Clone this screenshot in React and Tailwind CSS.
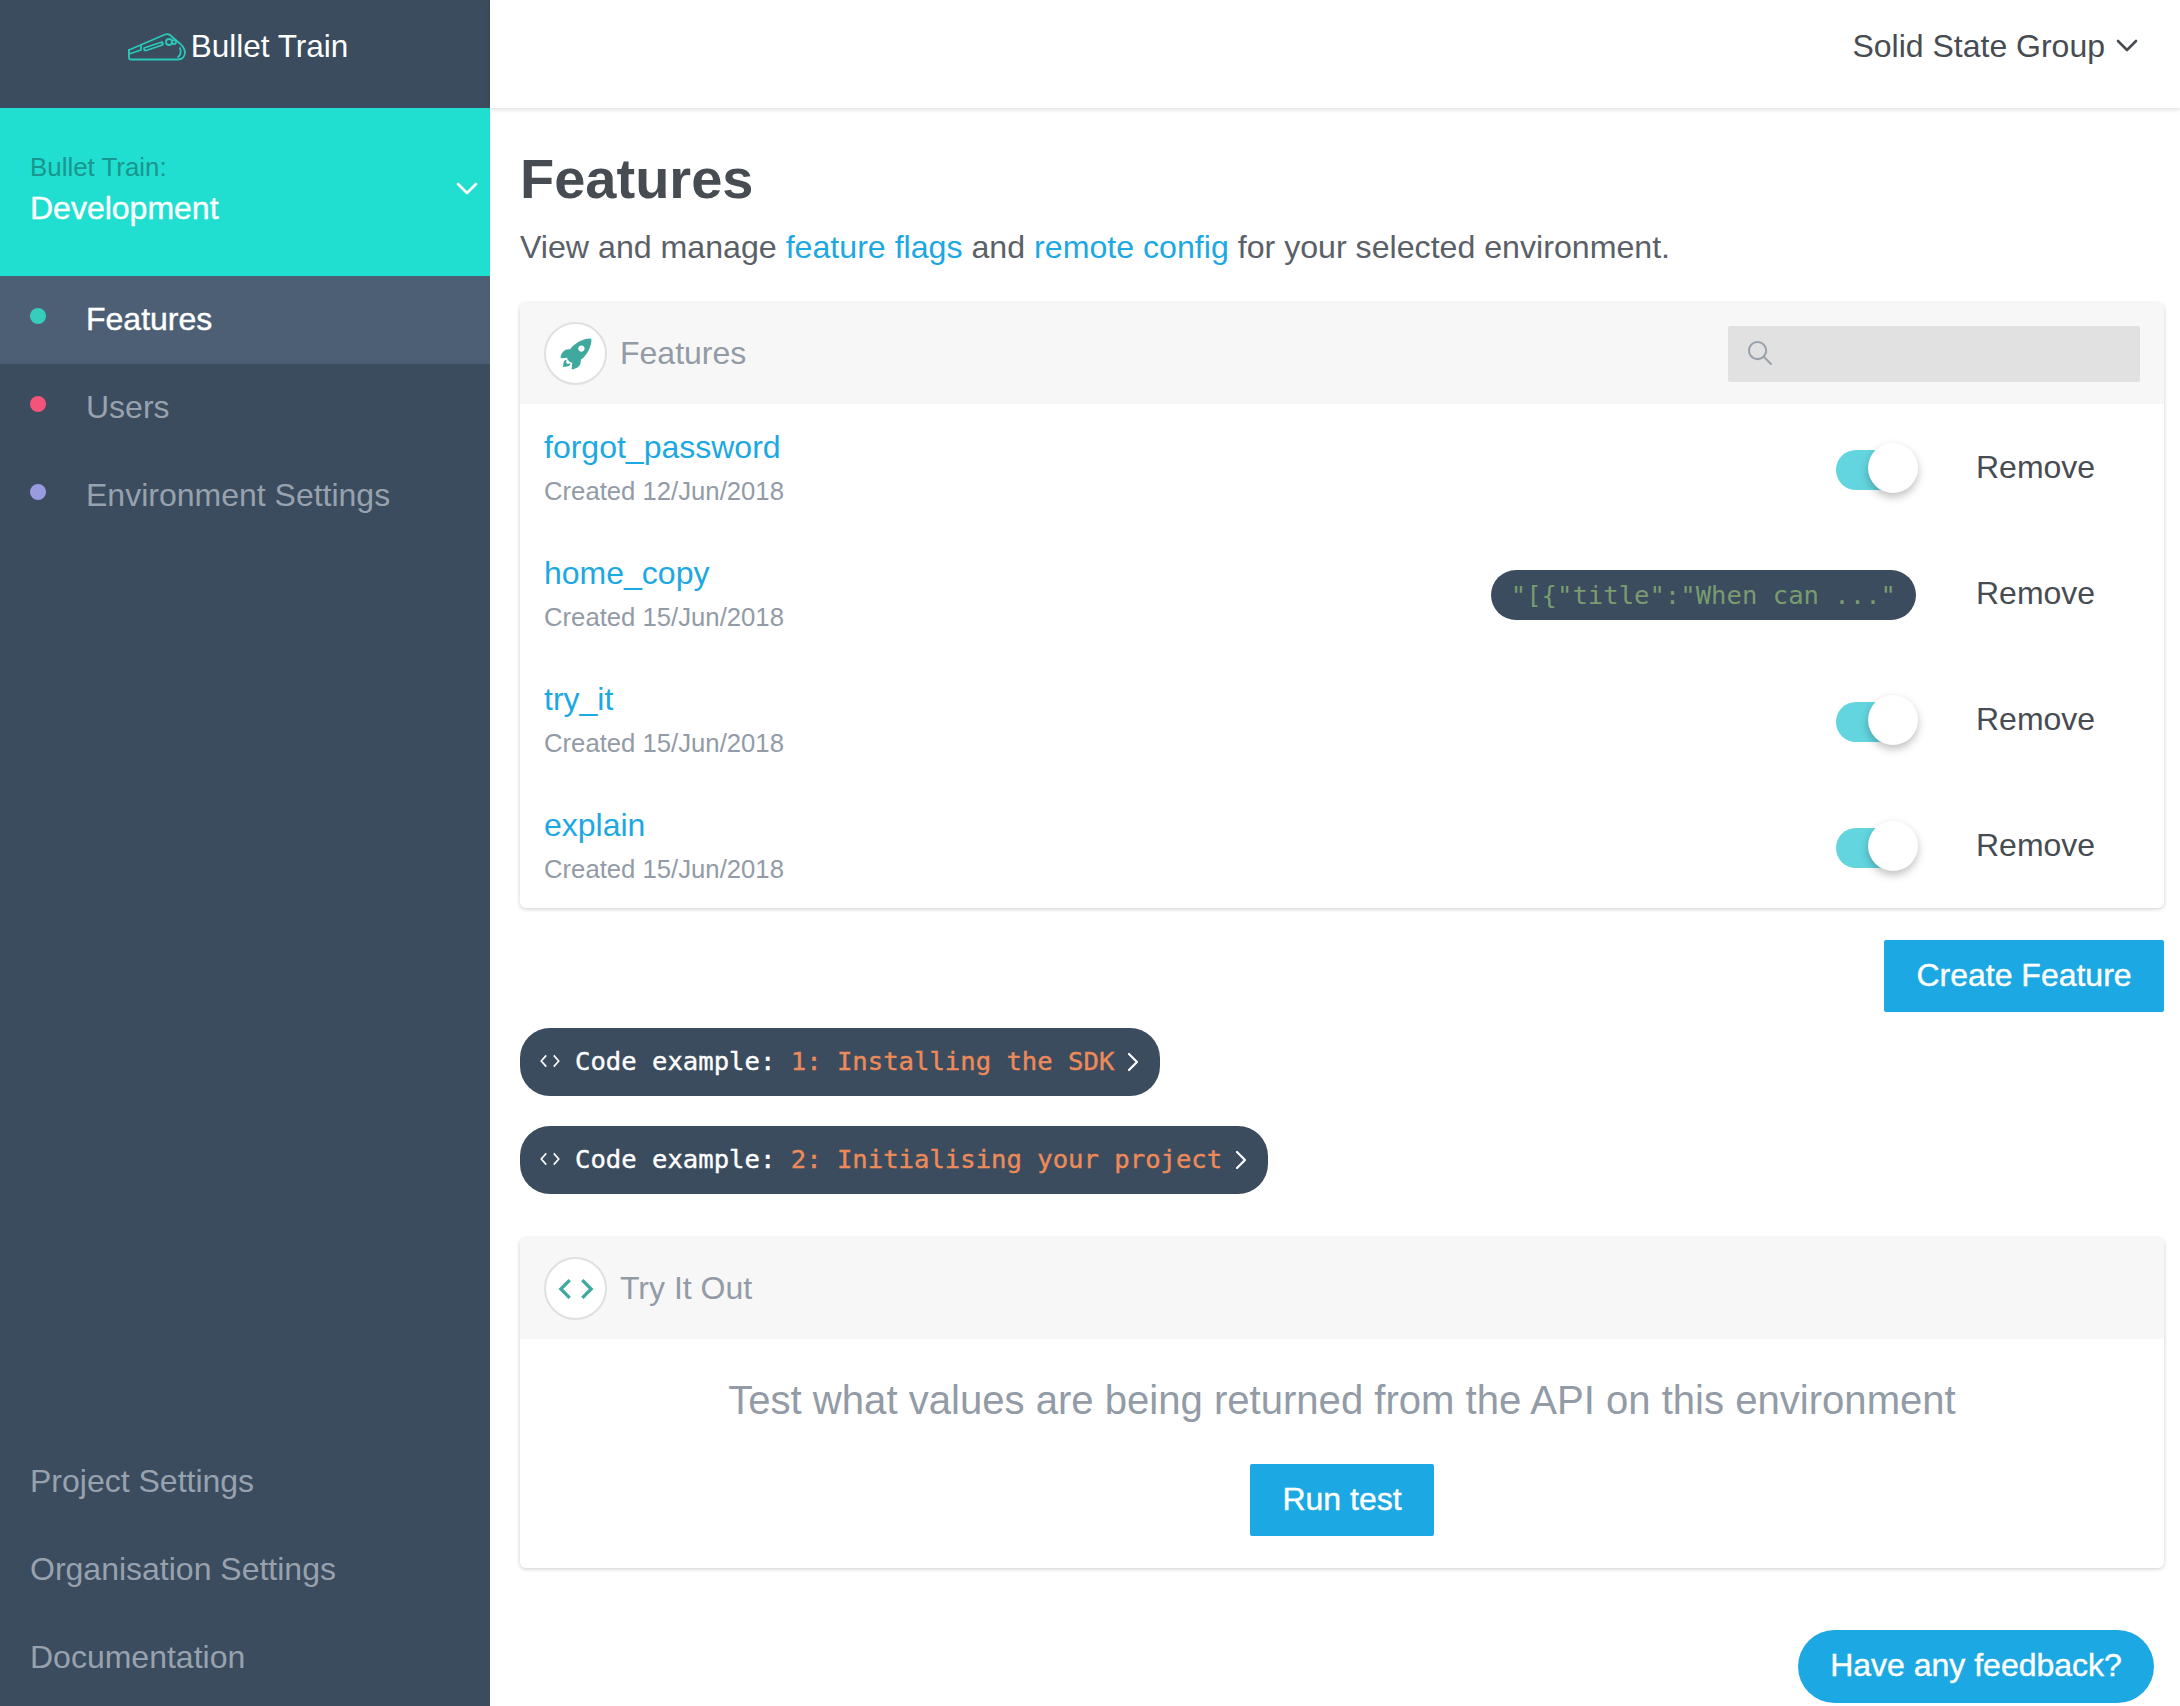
import React from 'react';
import { IoIosRocket, IoIosSearch, IoMdCode } from 'react-icons/io';

const features = [
    { name: 'forgot_password', created: 'Created 12/Jun/2018' },
    { name: 'home_copy', created: 'Created 15/Jun/2018', value: '"[{"title":"When can ..."' },
    { name: 'try_it', created: 'Created 15/Jun/2018' },
    { name: 'explain', created: 'Created 15/Jun/2018' },
];

const navItems = [
    { label: 'Features', dot: 'bg-[#37cdbd]', active: true },
    { label: 'Users', dot: 'bg-[#f4547a]' },
    { label: 'Environment Settings', dot: 'bg-[#9a9ae0]' },
];

function Logo() {
    return (
        <svg width="58" height="28" viewBox="0 0 58 28" fill="none" stroke="#2bc9b8" strokeWidth="1.8" strokeLinejoin="round" strokeLinecap="round">
            <path d="M1 17 L1 25 Q1 26.5 3 26.5 L50 26.5 Q57 26 57 19 Q56 13 50 9 L42 2 Q40 0.5 37 1.5 Z" />
            <path d="M1 17 L1 21 L13 17 L13 13" />
            <path d="M16 15 L34 9 L35 11 Q35 12 33 12.5 L18 17.5 Q16 18 16 15 Z" />
            <circle cx="41" cy="9" r="3" />
            <circle cx="46" cy="9" r="2" />
            <path d="M50 24 Q54 21 52 15" />
        </svg>
    );
}

function CodeIcon({ size }) {
    return (
        <svg width={size} height={size} viewBox="0 0 32 24" fill="none" stroke="currentColor" strokeWidth="2.6">
            <path d="M10 3 L2 12 L10 21" />
            <path d="M22 3 L30 12 L22 21" />
        </svg>
    );
}

function ChevronDownThin({ className }) {
    return (
        <svg width="22" height="14" viewBox="0 0 22 14" fill="none" stroke="currentColor" strokeWidth="2.6" strokeLinecap="round" strokeLinejoin="round" className={className}>
            <path d="M2 2 L11 11 L20 2" />
        </svg>
    );
}

function ChevronRightThin() {
    return (
        <svg width="12" height="20" viewBox="0 0 12 20" fill="none" stroke="currentColor" strokeWidth="2.2" strokeLinecap="round" strokeLinejoin="round" className="text-white ml-[13px]">
            <path d="M2 2 L10 10 L2 18" />
        </svg>
    );
}

function Toggle() {
    return (
        <div className="relative w-[82px] h-[40px] mt-[6px]">
            <div className="w-[64px] h-[40px] rounded-full bg-[#62d5df]"></div>
            <div className="absolute left-[32px] top-[-7px] w-[50px] h-[50px] rounded-full bg-white shadow-[0_4px_8px_rgba(0,0,0,0.25)]"></div>
        </div>
    );
}

function CodePill({ label }) {
    return (
        <div className="w-fit h-[68px] rounded-[30px] bg-[#3a4c5e] flex items-center pl-[20px] pr-[21px] font-['DejaVu_Sans_Mono',monospace] text-[25.6px] [-webkit-text-stroke:0.4px]">
            <span className="text-white flex items-center pb-[2px]">
                <span className="mr-[15px]"><CodeIcon size={20} /></span>
                Code example:&nbsp;
            </span>
            <span className="text-[#ed8a5a] pb-[2px]">{label}</span>
            <ChevronRightThin />
        </div>
    );
}

function CardHeader({ icon, title, children }) {
    return (
        <div className="h-[101px] bg-[#f7f7f7] flex items-center justify-between pl-[24px] pr-[24px] rounded-t-[6px]">
            <div className="flex items-center">
                <div className="w-[63px] h-[63px] rounded-full bg-white border-2 border-[#e0e0e0] flex items-center justify-center text-[#3fa9a0]">
                    {icon}
                </div>
                <span className="ml-[13px] text-[32px] text-[#929ba6] pb-[1px]">{title}</span>
            </div>
            {children}
        </div>
    );
}

export default function App() {
    return (
        <div className="flex w-[2180px] h-[1706px] overflow-hidden bg-white text-[#474c52] font-['Liberation_Sans',sans-serif]">
            <aside className="w-[490px] shrink-0 bg-[#3a4c5e] flex flex-col justify-between">
                <div>
                    <div className="h-[108px] flex items-center justify-center gap-[5px] pb-[14px] pr-[14px]">
                        <Logo />
                        <span className="text-white text-[31.5px]">Bullet Train</span>
                    </div>
                    <div className="h-[168px] bg-[#20dfd0] relative pl-[30px] pt-[41px]">
                        <div className="text-[25.9px] leading-[36px] text-[#19968f]">Bullet Train:</div>
                        <div className="text-[32px] leading-[46px] text-white [-webkit-text-stroke:0.4px]">Development</div>
                        <ChevronDownThin className="absolute right-[12px] top-[74px] text-white" />
                    </div>
                    {navItems.map(item => (
                        <div key={item.label} className={`h-[88px] flex items-center relative pl-[86px] pb-[2px] text-[32px] ${item.active ? 'bg-[#4c5f75] text-white [-webkit-text-stroke:0.4px]' : 'text-[#98a2ae]'}`}>
                            <span className={`absolute left-[30px] top-[32px] w-[16px] h-[16px] rounded-full ${item.dot}`}></span>
                            {item.label}
                        </div>
                    ))}
                </div>
                <div className="pb-[5px]">
                    {['Project Settings', 'Organisation Settings', 'Documentation'].map(link => (
                        <div key={link} className="h-[88px] flex items-center pl-[30px] text-[32px] text-[#98a2ae]">{link}</div>
                    ))}
                </div>
            </aside>

            <div className="flex-1 flex flex-col min-w-0 relative">
                <header className="h-[108px] shrink-0 flex items-center justify-end pr-[42px] pb-[16px] shadow-[0_2px_4px_rgba(0,0,0,0.12)]">
                    <span className="text-[32px]">Solid State Group</span>
                    <ChevronDownThin className="ml-[11px]" />
                </header>

                <main className="pl-[30px] pr-[16px]">
                    <h1 className="text-[56px] leading-[64px] font-bold mt-[39px]">Features</h1>
                    <p className="text-[32.15px] leading-[44px] mt-[14px] text-[#5a6067]">
                        View and manage <span className="text-[#1ca8e3]">feature flags</span> and <span className="text-[#1ca8e3]">remote config</span> for your selected environment.
                    </p>

                    <section className="mt-[34px] rounded-[6px] bg-white shadow-[0_1px_4px_rgba(0,0,0,0.2)]">
                        <CardHeader icon={<IoIosRocket size={38} />} title="Features">
                            <div className="w-[412px] h-[56px] bg-[#e1e1e1] rounded-[2px] flex items-center pl-[16px] pb-[2px] text-[#9aa3ad]">
                                <IoIosSearch size={32} />
                            </div>
                        </CardHeader>
                        {features.map(f => (
                            <div key={f.name} className="h-[126px] flex items-center pl-[24px]">
                                <div className="flex-1 pt-[4px]">
                                    <div className="text-[32px] leading-[44px] text-[#1ca8e3]">{f.name}</div>
                                    <div className="text-[25.7px] leading-[44px] text-[#929ba6]">{f.created}</div>
                                </div>
                                {f.value ? (
                                    <div className="h-[50px] rounded-[25px] bg-[#3a4c5e] flex items-center px-[20px] text-[25.6px] text-[#7a9b6f] font-['DejaVu_Sans_Mono',monospace] mr-[2px] mt-[4px]">{f.value}</div>
                                ) : (
                                    <Toggle />
                                )}
                                <div className="w-[246px] pl-[58px] text-[32px]">Remove</div>
                            </div>
                        ))}
                    </section>

                    <div className="flex justify-end mt-[32px]">
                        <button className="w-[280px] h-[72px] pb-[2px] bg-[#1ca8e3] text-white text-[32px] rounded-[2px] [-webkit-text-stroke:0.4px]">Create Feature</button>
                    </div>

                    <div className="mt-[16px] flex flex-col gap-[30px]">
                        <CodePill label="1: Installing the SDK" />
                        <CodePill label="2: Initialising your project" />
                    </div>

                    <section className="mt-[44px] rounded-[6px] bg-white shadow-[0_1px_4px_rgba(0,0,0,0.2)]">
                        <CardHeader icon={<IoMdCode size={40} />} title="Try It Out" />
                        <div className="h-[229px] flex flex-col items-center pt-[35px]">
                            <p className="text-[40.1px] leading-[52px] text-[#929ba6]">Test what values are being returned from the API on this environment</p>
                            <button className="mt-[38px] w-[184px] h-[72px] pb-[2px] bg-[#1ca8e3] text-white text-[32px] rounded-[2px] [-webkit-text-stroke:0.4px]">Run test</button>
                        </div>
                    </section>
                </main>

                <button className="absolute left-[1308px] top-[1630px] w-[356px] h-[73px] pb-[4px] rounded-full bg-[#1ca8e3] text-white text-[32px] [-webkit-text-stroke:0.4px]">Have any feedback?</button>
            </div>
        </div>
    );
}
